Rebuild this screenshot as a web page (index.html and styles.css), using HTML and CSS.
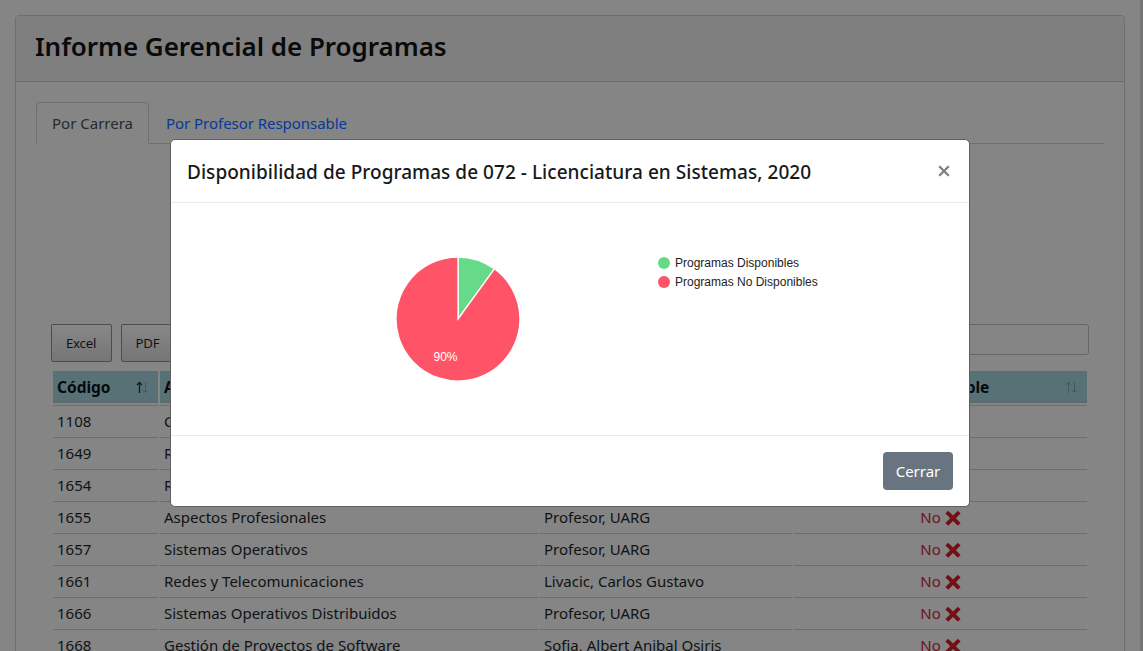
FILE: index.html
```
<!DOCTYPE html>
<html lang="es">
<head>
<meta charset="utf-8">
<title>Informe Gerencial de Programas</title>
<link rel="stylesheet" href="styles.css">
</head>
<body>
<svg class="defs" width="0" height="0">
  <symbol id="times" viewBox="0 0 16 16"><path d="M3.200.7 8 5.500 12.800.7 15.600 3.500 10.800 8.200l4.800 4.700-2.800 2.800L8 10.900l-4.800 4.800-2.800-2.800 4.800-4.700L.4 3.500z" fill="currentColor"/></symbol>
</svg>
<div class="page">
  <section class="card">
    <header class="card-header"><h1 class="title">Informe Gerencial de Programas</h1></header>
    <div class="card-body">
      <nav class="tabs">
        <a class="tab active"><span>Por Carrera</span></a>
        <a class="tab link"><span>Por Profesor Responsable</span></a>
      </nav>
      <div class="toolbar">
        <button class="export">Excel</button>
        <button class="export pdf">PDF</button>
        <div class="search"></div>
      </div>
      <div class="table">
        <div class="row head">
          <div class="th"><span>Código</span><svg class="sort" width="13" height="14" viewBox="0 0 13 14"><path d="M3.500 13V2.500M1 5l2.500-2.500L6 5" stroke="#101c22" stroke-width="1.300"/><path d="M9.500 2v10.500M7 10l2.500 2.500L12 10" stroke="#3f5960"/></svg></div>
          <div class="th"><span>A</span></div>
          <div class="th"></div>
          <div class="th available"><span>Disponible</span><svg class="sort" width="13" height="14" viewBox="0 0 13 14"><path d="M3.500 13V2.500M1 5l2.500-2.500L6 5M9.500 2v10.500M7 10l2.500 2.500L12 10" stroke="#3f5960"/></svg></div>
        </div>
        <div class="row"><div class="td">1108</div><div class="td">C</div><div class="td"></div><div class="td"></div></div>
        <div class="row"><div class="td">1649</div><div class="td">R</div><div class="td"></div><div class="td"></div></div>
        <div class="row"><div class="td">1654</div><div class="td">R</div><div class="td"></div><div class="td"></div></div>
        <div class="row"><div class="td">1655</div><div class="td">Aspectos Profesionales</div><div class="td">Profesor, UARG</div><div class="td no">No <svg class="x"><use href="#times"/></svg></div></div>
        <div class="row"><div class="td">1657</div><div class="td">Sistemas Operativos</div><div class="td">Profesor, UARG</div><div class="td no">No <svg class="x"><use href="#times"/></svg></div></div>
        <div class="row"><div class="td">1661</div><div class="td">Redes y Telecomunicaciones</div><div class="td">Livacic, Carlos Gustavo</div><div class="td no">No <svg class="x"><use href="#times"/></svg></div></div>
        <div class="row"><div class="td">1666</div><div class="td">Sistemas Operativos Distribuidos</div><div class="td">Profesor, UARG</div><div class="td no">No <svg class="x"><use href="#times"/></svg></div></div>
        <div class="row"><div class="td">1668</div><div class="td">Gestión de Proyectos de Software</div><div class="td">Sofia, Albert Anibal Osiris</div><div class="td no">No <svg class="x"><use href="#times"/></svg></div></div>
      </div>
    </div>
  </section>
  <div class="scroll"></div>
  <div class="modal">
    <header class="modal-header">
      <h2 class="modal-title">Disponibilidad de Programas de 072 - Licenciatura en Sistemas, 2020</h2>
      <svg class="close" width="12" height="12" viewBox="0 0 12 12"><path d="M1.200 1.200l9.600 9.600M10.800 1.200l-9.600 9.600" stroke="#7f7f7f" stroke-width="2.300"/></svg>
    </header>
    <div class="modal-body">
      <svg class="pie" width="126" height="126" viewBox="0 0 126 126">
        <g stroke="#fff" stroke-width="1.300">
          <path d="M63 63V1A62 62 0 0 1 99.440 12.840Z" fill="#66da88"/>
          <path d="M63 63 99.440 12.840A62 62 0 1 1 63 1Z" fill="#ff5468"/>
        </g>
        <text class="pct" x="38.500" y="105">90%</text>
      </svg>
      <ul class="legend">
        <li><i class="dot green"></i><span>Programas Disponibles</span></li>
        <li><i class="dot red"></i><span>Programas No Disponibles</span></li>
      </ul>
    </div>
    <footer class="modal-footer"><button class="btn">Cerrar</button></footer>
  </div>
</div>
</body>
</html>
```
FILE: styles.css
```
* { box-sizing: border-box; }
body { margin: 0; overflow: hidden; background: #858585; font-family: "Noto Sans", "Open Sans", sans-serif; font-size: 15px; color: #101214; }
.defs { position: absolute; }
h1, h2, ul { margin: 0; padding: 0; }
button { font-family: inherit; }
.page { position: relative; height: 651px; overflow: hidden; padding: 15px 18px 0 15px; }
.card { height: 700px; border: 1px solid #6d6e6f; border-radius: 4px; }
.card-header { height: 66px; background: #7f7f7f; border-bottom: 1px solid #6a6a6a; padding: 10px 19px 0; border-radius: 3px 3px 0 0; }
.title { font-size: 26px; line-height: 40px; font-weight: 600; letter-spacing: -.04px; white-space: nowrap; color: #090a0b; }
.card-body { padding: 20px; }
.tabs { display: flex; height: 42px; border-bottom: 1px solid #6c7074; }
.tab { height: 42px; line-height: 41px; padding: 0 16px; border: 1px solid transparent; white-space: nowrap; }
.tab.active { width: 113px; padding: 0 15px; background: #858585; border-color: #6c7074 #6c7074 #858585; border-radius: 4px 4px 0 0; color: #262a2d; }
.link { color: #06399a; letter-spacing: -.04px; }
.toolbar { display: flex; margin: 180px 15px 0; height: 38px; }
.export { width: 61px; height: 38px; margin-right: 9px; padding: 0 1px 0 0; border: 1px solid #4d4d4d; border-radius: 2px; background: linear-gradient(#878787, #767676); color: #101214; font-size: 13.200px; letter-spacing: -.2px; }
.pdf { width: 54px; }
.search { margin-left: auto; width: 180px; height: 31px; border: 1px solid #66666a; border-radius: 3px; }
.table { margin: 9px 17px 0; }
.row { display: grid; grid-template-columns: 105px 378px 252px 293px; column-gap: 2px; height: 32px; line-height: 31px; white-space: nowrap; }
.head { margin-bottom: 2px; line-height: 24px; font-weight: 700; font-size: 15.500px; color: #06090a; }
.th { display: flex; align-items: center; justify-content: space-between; background: #577177; border-bottom: 2px solid #62696c; padding: 2px 9px 0 4px; }
.available span { flex: 1; text-align: center; padding-left: 34px; }
.sort { fill: none; }
.td { border-top: 1px solid #6b6d6f; padding: 0 4px; }
.no { text-align: center; color: #721018; padding-right: 4px; }
.x { width: 16px; height: 16px; vertical-align: -3px; }
.scroll { position: absolute; right: 0; top: 0; width: 3px; height: 651px; background: #757575; }
.modal { position: absolute; left: 170px; top: 139px; width: 800px; height: 368px; background: #fff; border: 1px solid #606060; border-radius: 5px; display: flex; flex-direction: column; }
.modal-header { height: 63px; border-bottom: 1px solid #e9ecef; padding: 0 19px 0 16px; display: flex; align-items: center; justify-content: space-between; }
.modal-title { font-size: 19px; font-weight: 500; line-height: 30px; padding-top: 2px; letter-spacing: .045px; white-space: nowrap; color: #16191c; }
.modal-body { flex: 1; display: flex; padding: 53px 0 0 224px; }
.legend { list-style: none; margin: -2px 0 0 137px; font: 12px/19px "Liberation Sans", sans-serif; color: #222; }
.legend li { display: flex; align-items: center; height: 19px; }
.dot { width: 12px; height: 12px; border-radius: 50%; margin: 0 5px 2px 0; }
.green { background: #66da88; }
.red { background: #ff5468; }
.pct { font: 12px "Liberation Sans", sans-serif; fill: #fff; }
.modal-footer { height: 71px; border-top: 1px solid #e9ecef; padding: 16px 16px; display: flex; justify-content: flex-end; }
.btn { width: 70px; height: 38px; border: 0; border-radius: 4px; background: #687580; color: #fff; font-size: 15px; padding: 0; }
```
